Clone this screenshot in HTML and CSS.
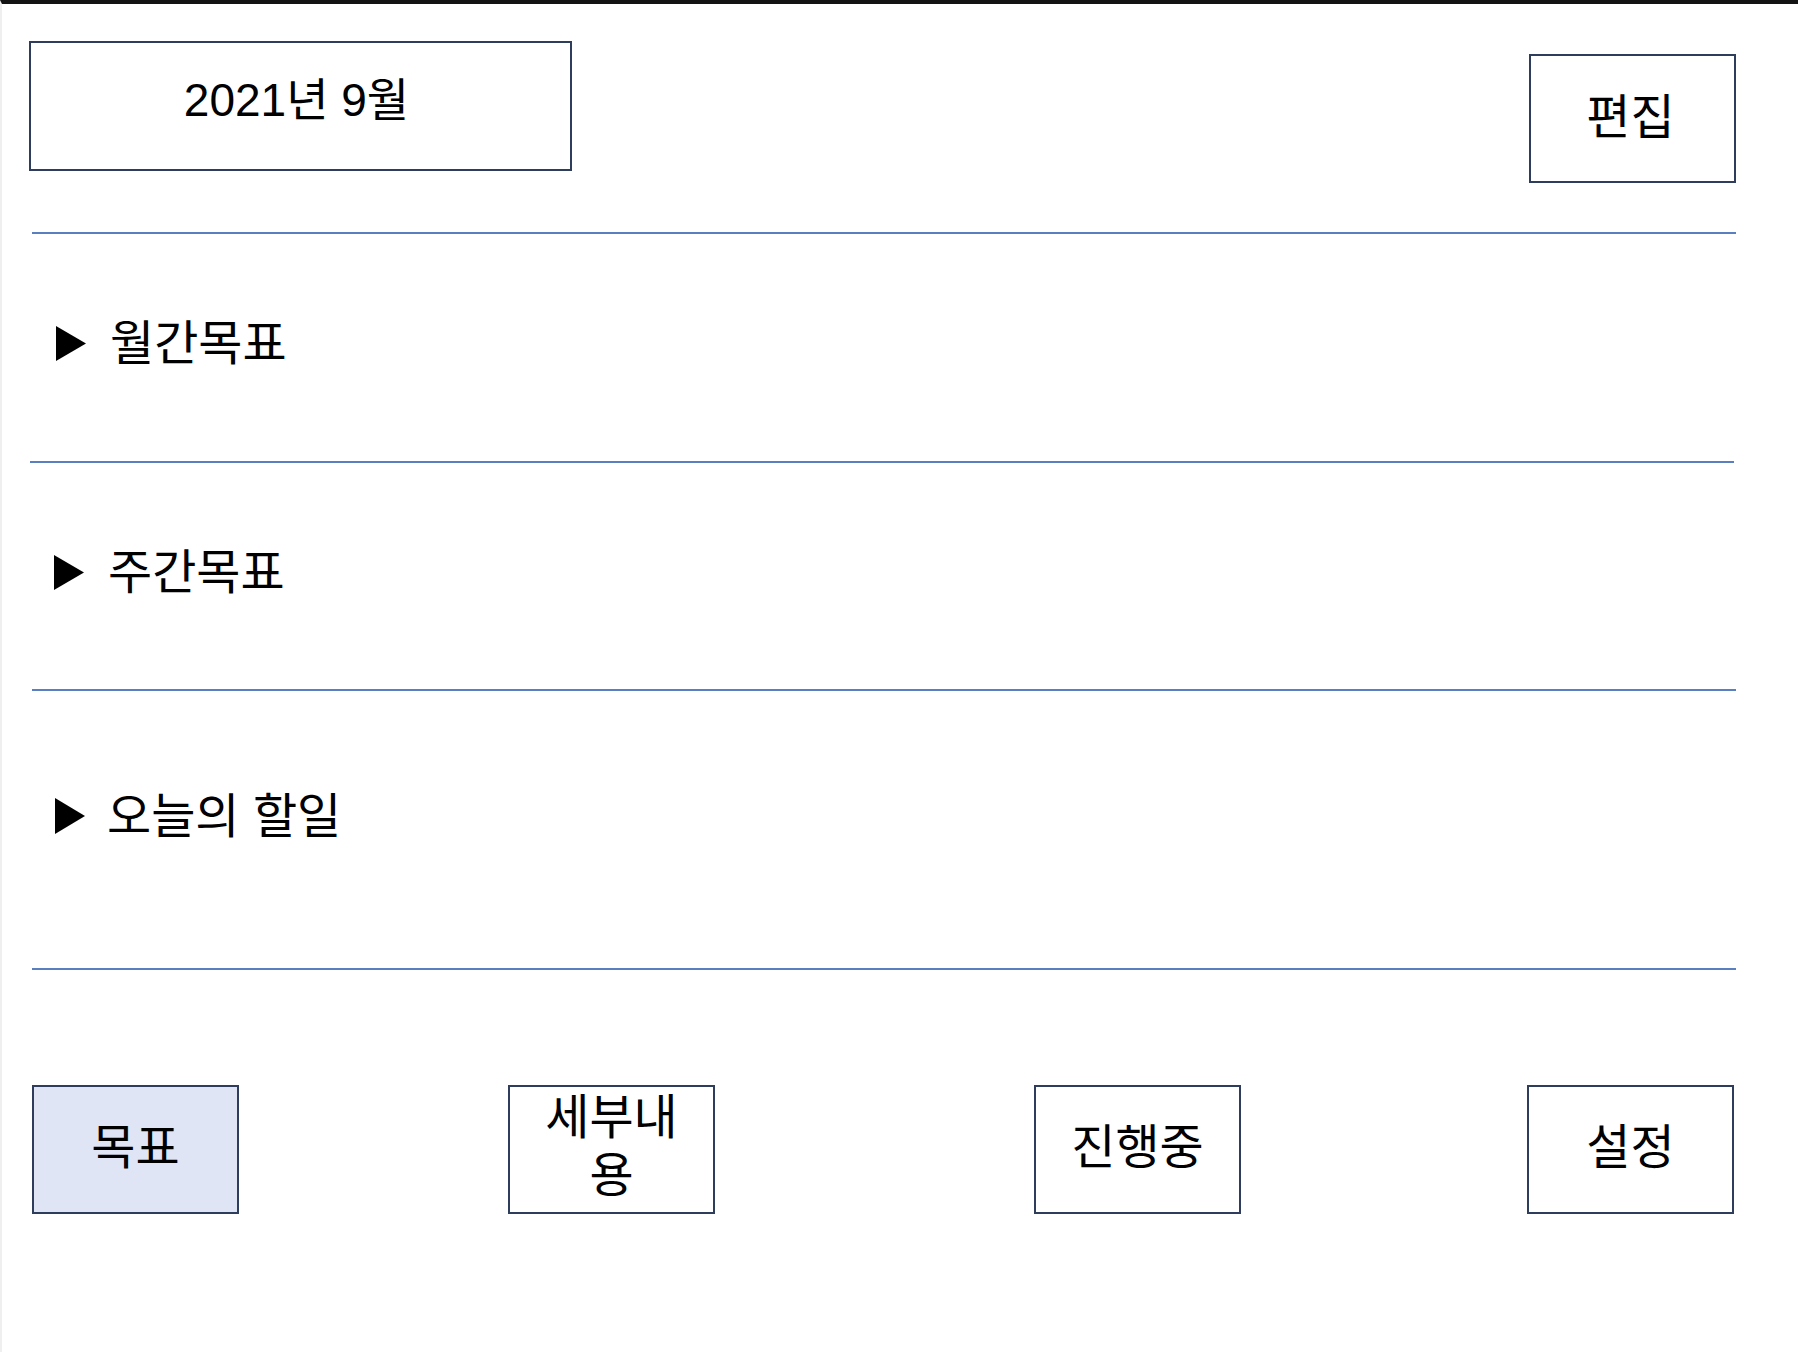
FILE: index.html
```html
<!DOCTYPE html>
<html lang="ko">
<head>
<meta charset="utf-8">
<title>2021년 9월</title>
<link rel="stylesheet" href="styles.css">
</head>
<body>
<div class="page">
  <header class="header">
    <div class="date-box"><span class="date-text">2021년 9월</span></div>
    <div class="edit-box"><span class="box-text">편집</span></div>
  </header>

  <main class="goals">
    <section class="goal goal--month">
      <svg class="arrow" width="30" height="35" viewBox="0 0 30 35"><polygon points="0,0 30,17.5 0,35" fill="#000"/></svg>
      <span class="goal-title">월간목표</span>
    </section>
    <section class="goal goal--week">
      <svg class="arrow" width="30" height="35" viewBox="0 0 30 35"><polygon points="0,0 30,17.5 0,35" fill="#000"/></svg>
      <span class="goal-title">주간목표</span>
    </section>
    <section class="goal goal--today">
      <svg class="arrow" width="30" height="36" viewBox="0 0 30 36"><polygon points="0,0 30,18 0,36" fill="#000"/></svg>
      <span class="goal-title">오늘의 할일</span>
    </section>
  </main>

  <nav class="tabs">
    <div class="tab tab--active"><span class="box-text">목표</span></div>
    <div class="tab tab--detail"><span class="box-text">세부내<br>용</span></div>
    <div class="tab tab--progress"><span class="box-text">진행중</span></div>
    <div class="tab tab--settings"><span class="box-text">설정</span></div>
  </nav>
</div>
</body>
</html>
```

FILE: styles.css
```css
html, body {
  margin: 0;
  padding: 0;
  background: #ffffff;
}

body {
  font-family: "Noto Sans CJK KR", "Liberation Sans", sans-serif;
  color: #000;
}

.page {
  box-sizing: border-box;
  width: 1798px;
  min-height: 1352px;
  border-top: 4px solid #131313;
  border-left: 2px solid #efefef;
}

/* header */
.header {
  display: flex;
  justify-content: space-between;
  align-items: flex-start;
  padding: 37px 62px 0 27px;
}

.date-box {
  box-sizing: border-box;
  width: 543px;
  height: 130px;
  border: 2px solid #2f3d5c;
  display: flex;
  align-items: center;
  justify-content: center;
  padding: 0 8px 12px 0;
}

.date-text {
  font-family: "Liberation Sans", "Noto Sans CJK KR", sans-serif;
  font-size: 46px;
  line-height: 52px;
}

.edit-box {
  box-sizing: border-box;
  margin-top: 13px;
  width: 207px;
  height: 129px;
  border: 2px solid #2f3d5c;
  display: flex;
  align-items: center;
  justify-content: center;
  padding: 0 4px 12px 0;
}

.box-text {
  font-size: 48px;
  line-height: 56px;
  text-align: center;
}

/* goal sections */
.goals {
  margin: 49px 62px 0 30px;
}

.goal {
  box-sizing: border-box;
  display: flex;
  align-items: center;
  gap: 24px;
  border-top: 2px solid #5a7fc0;
  padding-left: 24px;
}

.goal--month {
  height: 229px;
  padding-bottom: 17px;
}

.goal--week {
  height: 228px;
  margin-left: -2px;
  margin-right: 2px;
  padding-bottom: 17px;
}

.goal--today {
  height: 281px;
  border-bottom: 2px solid #5a7fc0;
  padding-left: 23px;
  padding-bottom: 36px;
  gap: 22px;
}

.arrow {
  flex: none;
  margin-top: 9px;
}

.goal-title {
  font-size: 48px;
  line-height: 56px;
}

/* bottom tabs */
.tabs {
  display: grid;
  grid-template-columns: 207px 269px 207px 319px 207px 286px 207px;
  margin: 115px 0 0 30px;
}

.tab {
  box-sizing: border-box;
  height: 129px;
  border: 2px solid #2f3d5c;
  display: flex;
  align-items: center;
  justify-content: center;
  padding-bottom: 14px;
}

.tab--active {
  grid-column: 1;
  background: #dfe5f5;
}

.tab--detail {
  grid-column: 3;
  padding-bottom: 6px;
}

.tab--detail .box-text {
  font-family: "Liberation Sans", "Noto Sans CJK KR", sans-serif;
  line-height: 58px;
}

.tab--progress {
  grid-column: 5;
}

.tab--settings {
  grid-column: 7;
}
```
